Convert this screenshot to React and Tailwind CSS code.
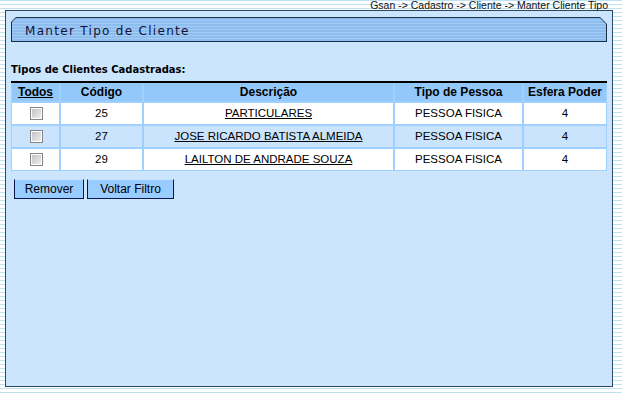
import React from "react";

const rows = [
  { codigo: "25", descricao: "PARTICULARES", tipo: "PESSOA FISICA", esfera: "4", bg: "bg-white" },
  { codigo: "27", descricao: "JOSE RICARDO BATISTA ALMEIDA", tipo: "PESSOA FISICA", esfera: "4", bg: "bg-[#cbe4fd]" },
  { codigo: "29", descricao: "LAILTON DE ANDRADE SOUZA", tipo: "PESSOA FISICA", esfera: "4", bg: "bg-white" },
];

function Checkbox() {
  return (
    <div className="w-[13px] h-[13px] border border-[#858585] bg-white p-px">
      <div className="w-full h-full bg-[linear-gradient(135deg,#c4c4c4,#ededed)]" />
    </div>
  );
}

export default function App() {
  return (
    <div className="w-[622px] h-[394px] overflow-hidden bg-[repeating-linear-gradient(to_bottom,#bfe1f4_0px,#bfe1f4_1px,#ffffff_1px,#ffffff_4px)] font-['Liberation_Sans',Arial,sans-serif] text-black">
      {/* Breadcrumb */}
      <div className="h-[10px] pr-[14px] text-right text-[10.5px] leading-[11px] text-[#111]">
        Gsan -&gt; Cadastro -&gt; Cliente -&gt; Manter Cliente Tipo
      </div>

      {/* Panel */}
      <div className="ml-[5px] w-[608px] h-[377px] border border-[#2a4766] bg-[#cbe5fd] pt-[6px] px-[5px]">
        {/* Title bar */}
        <div className="h-[25px] bg-[#1d2f45] p-px [clip-path:polygon(5px_0,calc(100%-7px)_0,100%_7px,100%_100%,0_100%,0_5px)]">
          <div className="h-full flex items-center pl-[13px] pt-[2px] bg-[repeating-linear-gradient(to_bottom,#8dbcef_0px,#8dbcef_2px,#a5cbf4_2px,#a5cbf4_3px)] [clip-path:polygon(4px_0,calc(100%-6px)_0,100%_6px,100%_100%,0_100%,0_4px)]">
            <span className="font-['DejaVu_Sans',Verdana,sans-serif] text-[12px] tracking-[1.3px] text-[#121438]">
              Manter Tipo de Cliente
            </span>
          </div>
        </div>

        {/* Label */}
        <div className="mt-[22px] h-[12px] font-['DejaVu_Sans',Verdana,sans-serif] text-[10px] leading-[12px] font-bold">
          Tipos de Clientes Cadastradas:
        </div>

        {/* Table */}
        <div className="mt-[5px] border-t-2 border-black bg-[#a0d0ff] px-px pb-px grid grid-cols-[47px_81px_249px_127px_82px] grid-rows-[18px_21px_21px_21px] gap-[2px] text-[11.5px]">
          <div className="bg-[#93c8fb] flex items-center justify-center font-bold text-[12px] underline">Todos</div>
          <div className="bg-[#93c8fb] flex items-center justify-center font-bold text-[12px]">Código</div>
          <div className="bg-[#93c8fb] flex items-center justify-center font-bold text-[12px]">Descrição</div>
          <div className="bg-[#93c8fb] flex items-center justify-center font-bold text-[12px]">Tipo de Pessoa</div>
          <div className="bg-[#93c8fb] flex items-center justify-center font-bold text-[12px]">Esfera Poder</div>

          {rows.map((r) => (
            <React.Fragment key={r.codigo}>
              <div className={`${r.bg} flex items-center justify-center pl-[2px]`}>
                <Checkbox />
              </div>
              <div className={`${r.bg} flex items-center justify-center`}>{r.codigo}</div>
              <div className={`${r.bg} flex items-center justify-center underline`}>{r.descricao}</div>
              <div className={`${r.bg} flex items-center justify-center`}>{r.tipo}</div>
              <div className={`${r.bg} flex items-center justify-center`}>{r.esfera}</div>
            </React.Fragment>
          ))}
        </div>

        {/* Buttons */}
        <div className="mt-[8px] ml-[3px] flex gap-[3px]">
          <button className="w-[70px] h-[20px] bg-[#99ccff] border border-[#0a1450] border-t-[#c6e2ff] text-[12px] leading-none">
            Remover
          </button>
          <button className="w-[87px] h-[20px] bg-[#99ccff] border border-[#0a1450] border-t-[#c6e2ff] text-[12px] leading-none">
            Voltar Filtro
          </button>
        </div>
      </div>
    </div>
  );
}
